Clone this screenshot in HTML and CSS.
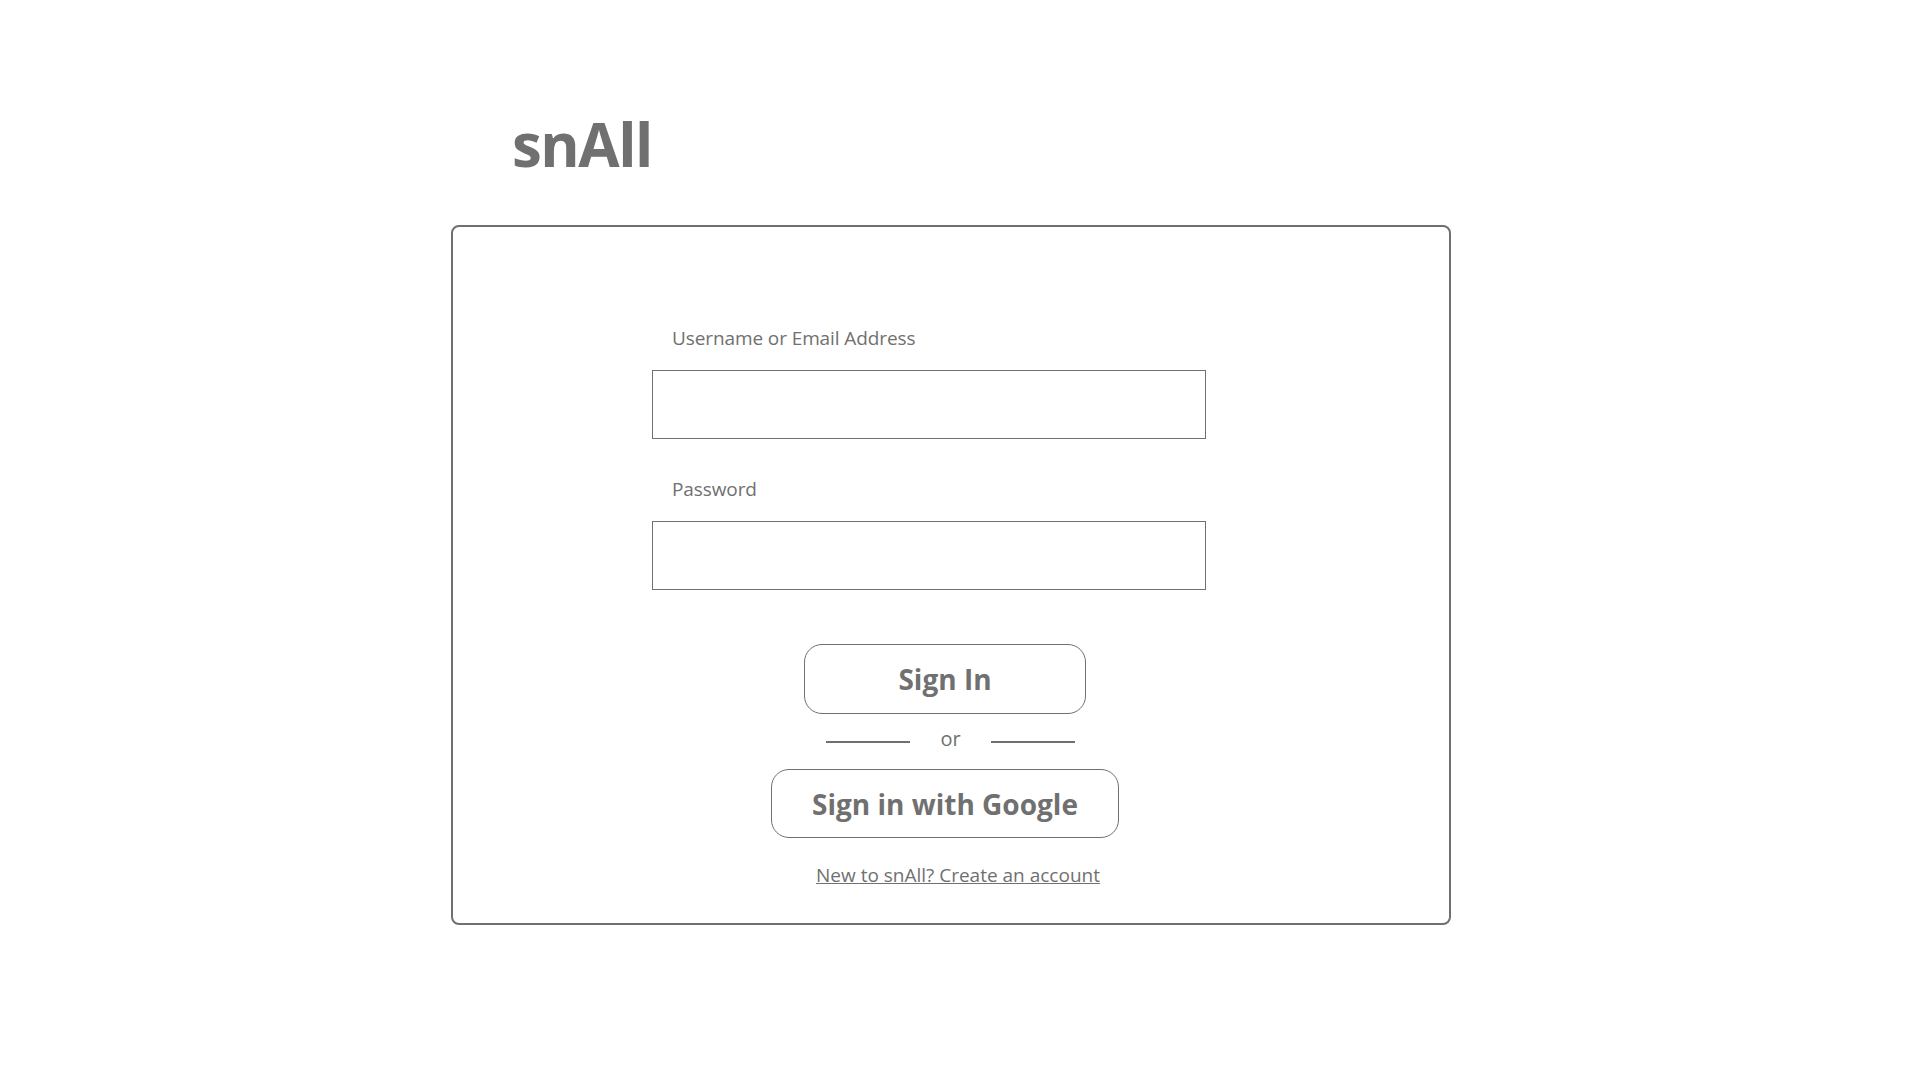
FILE: index.html
```html
<!DOCTYPE html>
<html>

<head>
    <meta charset="utf-8">
    <title>snAll - Sign In</title>
    <meta name="viewport" content="width=device-width, initial-scale=1.0">
    <link rel="stylesheet" href="styles.css">
</head>

<body>
    <div class="page">
        <h1 class="brand">snAll</h1>

        <div class="card">
            <form class="login" onsubmit="return false;">
                <label class="fieldLabel" for="username">Username or Email Address</label>
                <input id="username" class="field" type="text">

                <label class="fieldLabel" for="password">Password</label>
                <input id="password" class="field" type="password">

                <div class="actions">
                    <button class="btn signIn" type="submit">Sign In</button>
                    <div class="divider">
                        <span class="rule"></span>
                        <span class="orText">or</span>
                        <span class="rule"></span>
                    </div>
                    <button class="btn google" type="button">Sign in with Google</button>
                    <a class="signup" href="#">New to snAll? Create an account</a>
                </div>
            </form>
        </div>
    </div>
</body>
</html>
```

FILE: styles.css
```css
:root {
    font-family: "Open Sans", "Noto Sans", sans-serif;
    color: #707070;
}

body {
    margin: 0;
    background-color: #ffffff;
}

.page {
    width: 1000px;
    margin-left: 451px;
    padding-top: 114px;
}

.brand {
    margin: 0 0 51px 61px;
    font-size: 60px;
    line-height: 60px;
    font-weight: 700;
    letter-spacing: -1.5px;
}

.card {
    box-sizing: border-box;
    width: 1000px;
    height: 700px;
    border: 2px solid #707070;
    border-radius: 8px;
    padding: 99px 0 0 199px;
}

.login {
    display: flex;
    flex-direction: column;
    width: 554px;
}

.fieldLabel {
    font-size: 19px;
    line-height: 24px;
    letter-spacing: -0.1px;
    padding-left: 20px;
    margin-bottom: 20px;
}

.field {
    box-sizing: border-box;
    width: 554px;
    height: 69px;
    border: 1px solid #707070;
    border-radius: 0;
    margin: 0 0 38px 0;
    font-size: 20px;
    padding: 0 16px;
    font-family: inherit;
    color: #707070;
}

#password {
    margin-bottom: 0;
}

.actions {
    width: 586px;
    display: flex;
    flex-direction: column;
    align-items: center;
    margin-top: 54px;
}

.btn {
    box-sizing: border-box;
    height: 70px;
    border: 1px solid #707070;
    border-radius: 18px;
    background-color: #ffffff;
    color: #707070;
    font-family: inherit;
    font-size: 28px;
    font-weight: 700;
    cursor: pointer;
}

.signIn {
    width: 282px;
}

.google {
    width: 348px;
    height: 69px;
}

.divider {
    display: flex;
    align-items: center;
    gap: 30px;
    height: 24px;
    margin: 13px 0 18px 11px;
}

.rule {
    display: block;
    width: 84px;
    height: 2px;
    background-color: #707070;
    margin-top: 6px;
}

.orText {
    font-size: 20px;
    line-height: 24px;
}

.signup {
    margin: 25px 0 0 26px;
    font-size: 19px;
    line-height: 24px;
    color: #707070;
}
```
